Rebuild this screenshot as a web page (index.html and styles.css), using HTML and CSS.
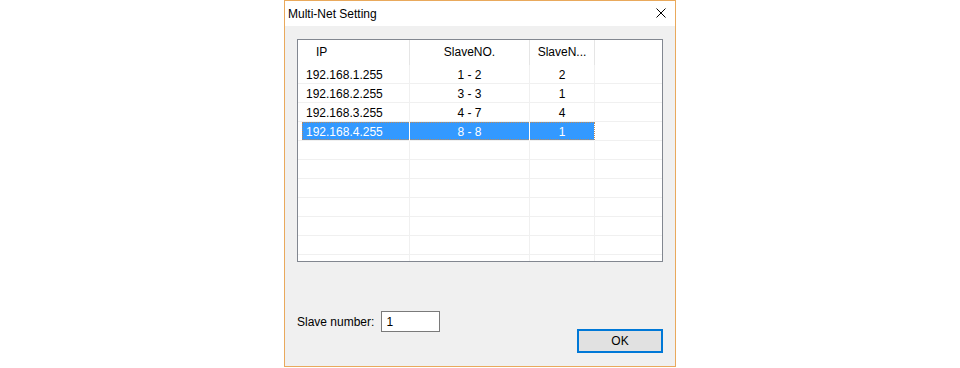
FILE: index.html
```
<!DOCTYPE html>
<html lang="en">
<head>
    <meta charset="UTF-8">
    <title>Multi-Net Setting</title>
    <link rel="stylesheet" href="styles.css">
</head>
<body>
    <div class="dialog">
        <div class="titlebar">
            <span class="title">Multi-Net Setting</span>
            <svg class="close" width="10" height="10" viewBox="0 0 10 10">
                <path d="M0.5 0.5 L9.5 9.5 M9.5 0.5 L0.5 9.5" stroke="#000" stroke-width="1" fill="none"/>
            </svg>
        </div>

        <div class="client">
            <div class="listview">
                <div class="header">
                    <div class="hcell left">IP</div>
                    <div class="hcell">SlaveNO.</div>
                    <div class="hcell">SlaveN...</div>
                    <div class="hcell last"></div>
                </div>
                <div class="rows">
                    <div class="row">
                        <div class="cell c1">192.168.1.255</div>
                        <div class="cell">1 - 2</div>
                        <div class="cell">2</div>
                        <div class="cell last"></div>
                    </div>
                    <div class="row">
                        <div class="cell c1">192.168.2.255</div>
                        <div class="cell">3 - 3</div>
                        <div class="cell">1</div>
                        <div class="cell last"></div>
                    </div>
                    <div class="row">
                        <div class="cell c1">192.168.3.255</div>
                        <div class="cell">4 - 7</div>
                        <div class="cell">4</div>
                        <div class="cell last"></div>
                    </div>
                    <div class="row sel">
                        <div class="cell c1">192.168.4.255</div>
                        <div class="cell">8 - 8</div>
                        <div class="cell">1</div>
                        <div class="cell last"></div>
                    </div>
                    <!-- empty grid rows -->
                    <div class="row"><div class="cell"></div><div class="cell"></div><div class="cell"></div><div class="cell last"></div></div>
                    <div class="row"><div class="cell"></div><div class="cell"></div><div class="cell"></div><div class="cell last"></div></div>
                    <div class="row"><div class="cell"></div><div class="cell"></div><div class="cell"></div><div class="cell last"></div></div>
                    <div class="row"><div class="cell"></div><div class="cell"></div><div class="cell"></div><div class="cell last"></div></div>
                    <div class="row"><div class="cell"></div><div class="cell"></div><div class="cell"></div><div class="cell last"></div></div>
                    <div class="row"><div class="cell"></div><div class="cell"></div><div class="cell"></div><div class="cell last"></div></div>
                    <div class="row"><div class="cell"></div><div class="cell"></div><div class="cell"></div><div class="cell last"></div></div>
                </div>
            </div>

            <div class="bottom">
                <div class="field">
                    <label for="slave">Slave number:</label>
                    <input type="text" id="slave" value="1">
                </div>
                <button class="ok">OK</button>
            </div>
        </div>
    </div>
</body>
</html>
```

FILE: styles.css
```
body {
    margin: 0;
    background-color: #fff;
    font-family: 'Liberation Sans', Arial, sans-serif;
    font-size: 12px;
    color: #000;
}
.dialog {
    margin-left: 284px;
    width: 390px;
    height: 365px;
    border: 1px solid #e9a95c;
    display: flex;
    flex-direction: column;
    background-color: #f0f0f0;
}
.titlebar {
    height: 25px;
    flex: none;
    background-color: #fff;
    display: flex;
    align-items: center;
    padding: 0 9px 0 3px;
}
.title {
    flex: 1;
    font-size: 12px;
    padding-top: 1px;
}
.close {
    display: block;
    margin-top: -1px;
}
.client {
    flex: 1;
    padding: 13px 12px 0 12px;
}
.listview {
    width: 364px;
    height: 221px;
    border: 1px solid #828790;
    background-color: #fff;
    overflow: hidden;
}
.header {
    display: grid;
    grid-template-columns: 112px 120px 65px 67px;
    height: 25px;
}
.hcell {
    border-right: 1px solid #e5e5e5;
    text-align: center;
    line-height: 25px;
    white-space: nowrap;
}
.hcell.left {
    text-align: left;
    padding-left: 18px;
}
.hcell.last {
    border-right: none;
}
.row {
    position: relative;
    display: grid;
    grid-template-columns: 112px 120px 65px 67px;
    height: 19px;
}
.cell {
    height: 17px;
    padding-top: 1px;
    border-right: 1px solid #f0f0f0;
    border-bottom: 1px solid #f0f0f0;
    text-align: center;
    line-height: 19px;
    white-space: nowrap;
}
.cell.c1 {
    text-align: left;
    padding-left: 8px;
}
.cell.last {
    border-right: none;
}
.sel .cell {
    background-color: #3399ff;
    color: #fff;
    border-right-color: #fff;
}
.sel .cell.c1 {
    background: linear-gradient(to right, #fff 4px, #3399ff 4px);
}
.sel .cell.last {
    background-color: #fff;
}
.sel::after {
    content: "";
    position: absolute;
    left: 4px;
    top: 0;
    width: 291px;
    height: 16px;
    border: 1px dotted #b98a5c;
}
.bottom {
    display: flex;
    justify-content: space-between;
    align-items: flex-start;
}
.field {
    margin-top: 49px;
    display: flex;
    align-items: center;
}
.field label {
    margin-right: 7px;
}
.field input {
    width: 53px;
    height: 19px;
    padding: 0 0 0 4px;
    border: 1px solid #7a7a7a;
    font-family: 'Liberation Sans', Arial, sans-serif;
    font-size: 12px;
    color: #000;
    background-color: #fff;
    box-sizing: content-box;
}
.ok {
    margin-top: 67px;
    width: 86px;
    height: 24px;
    border: 2px solid #0078d7;
    background-color: #e1e1e1;
    font-family: 'Liberation Sans', Arial, sans-serif;
    font-size: 12px;
    color: #000;
    padding: 0;
}
```
